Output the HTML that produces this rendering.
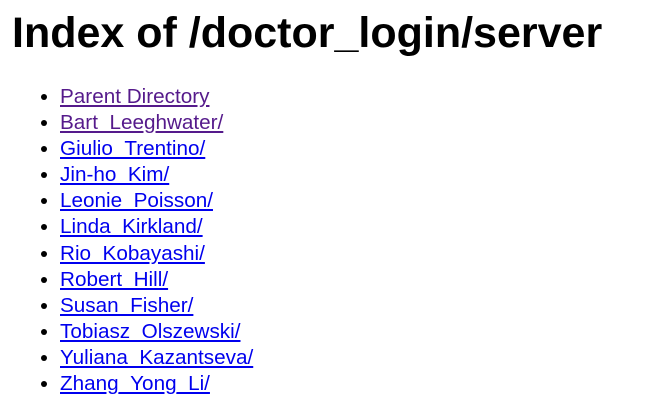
<!DOCTYPE html>
<html><head><style>
body{margin:0;background:#fff;font-family:"Liberation Sans",sans-serif;}
h1{position:absolute;left:12px;top:8px;margin:0;font-size:43px;line-height:50px;font-weight:bold;color:#000;}
ul{position:absolute;left:0;top:84px;margin:0;padding-left:60px;font-size:20.7px;line-height:26.1px;}
a{color:#0000ee;}
a.v{color:#551a8b;}
</style></head><body>
<h1>Index of /doctor_login/server</h1>
<ul>
<li><a class="v" href="#">Parent Directory</a></li>
<li><a class="v" href="#">Bart_Leeghwater/</a></li>
<li><a href="#">Giulio_Trentino/</a></li>
<li><a href="#">Jin-ho_Kim/</a></li>
<li><a href="#">Leonie_Poisson/</a></li>
<li><a href="#">Linda_Kirkland/</a></li>
<li><a href="#">Rio_Kobayashi/</a></li>
<li><a href="#">Robert_Hill/</a></li>
<li><a href="#">Susan_Fisher/</a></li>
<li><a href="#">Tobiasz_Olszewski/</a></li>
<li><a href="#">Yuliana_Kazantseva/</a></li>
<li><a href="#">Zhang_Yong_Li/</a></li>
</ul>
</body></html>
